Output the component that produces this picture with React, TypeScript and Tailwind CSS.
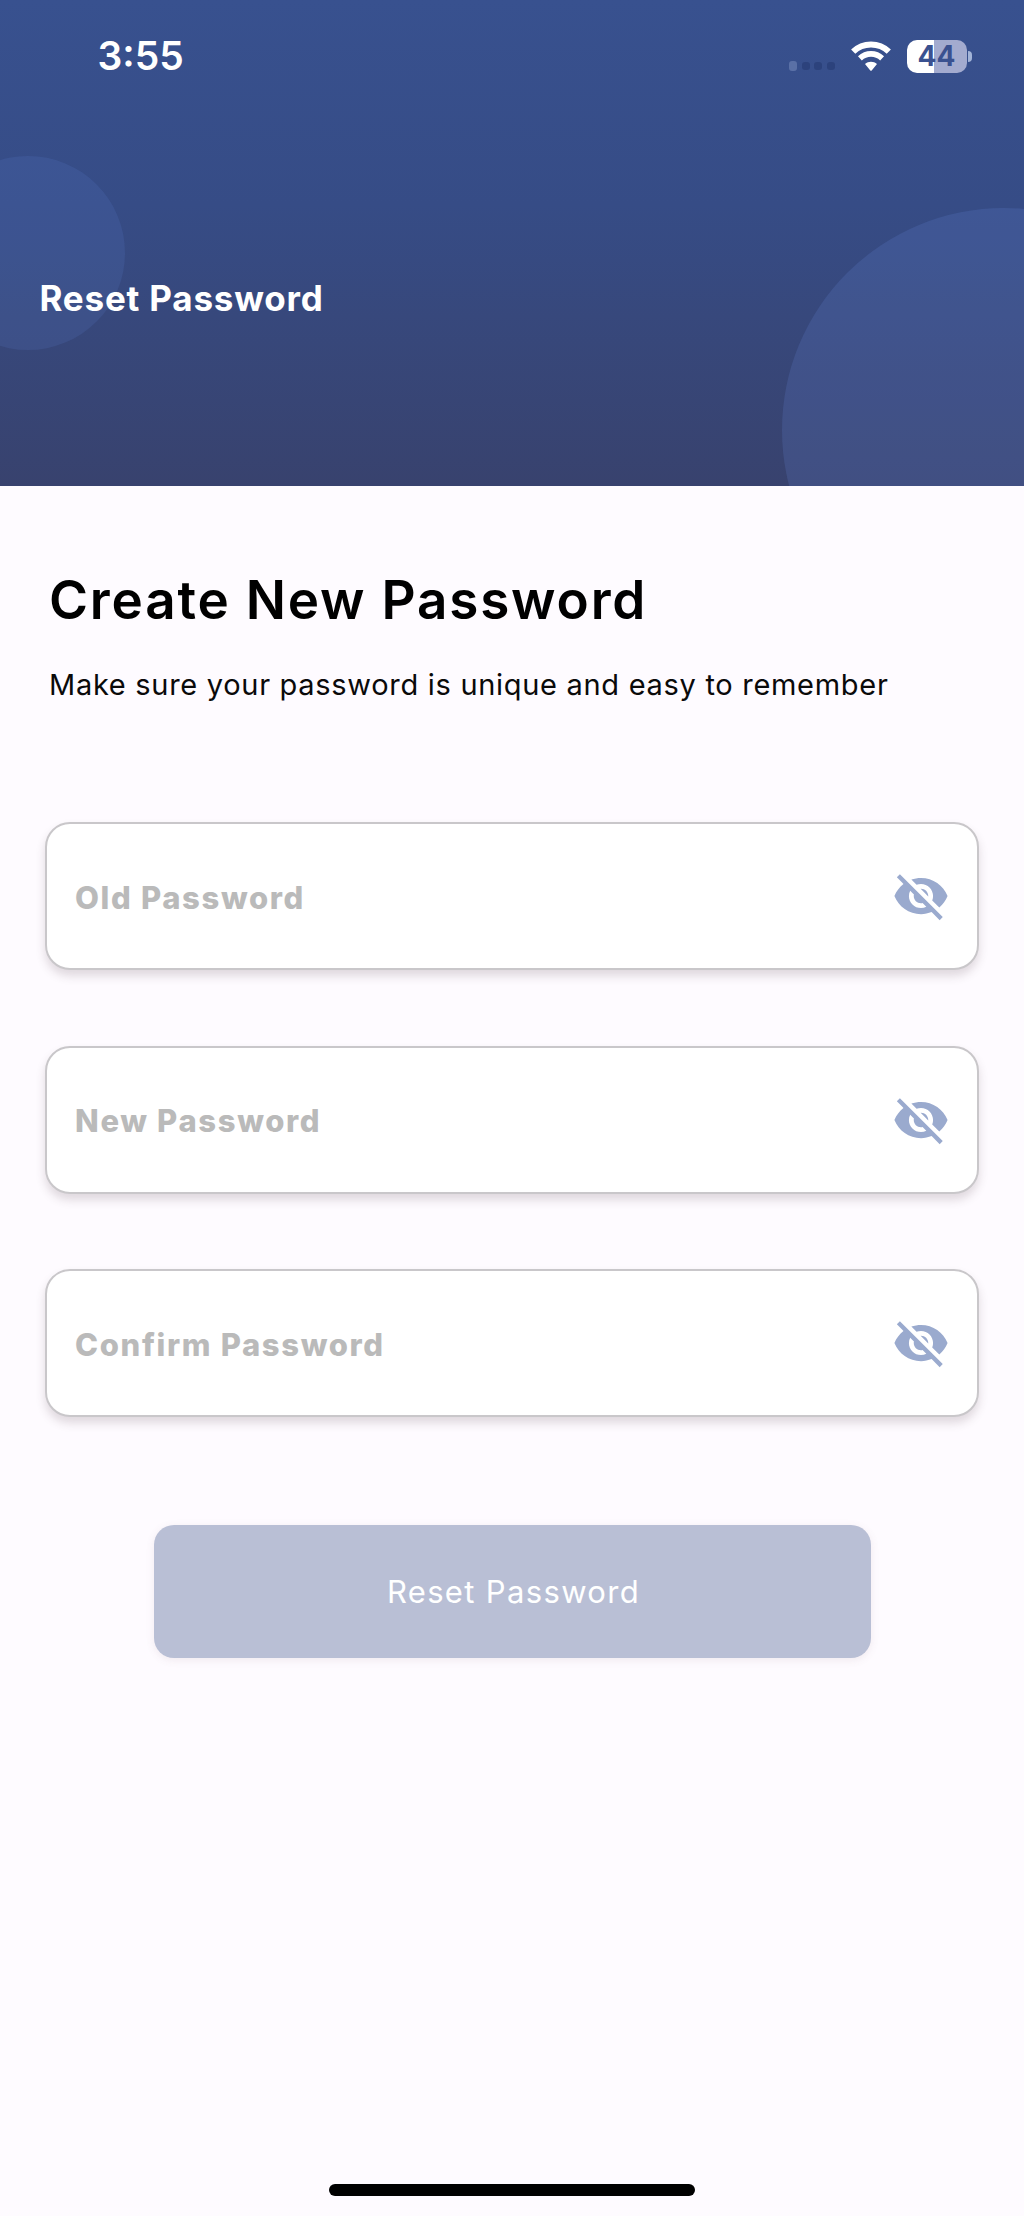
import React from "react";

function EyeOff() {
  return (
    <svg viewBox="0 0 24 24" className="size-[58px] shrink-0 fill-[#9aaace]" aria-hidden="true">
      <path d="M12 7c2.76 0 5 2.24 5 5 0 .65-.13 1.26-.36 1.83l2.92 2.92c1.51-1.26 2.7-2.89 3.43-4.75-1.73-4.39-6-7.5-11-7.5-1.4 0-2.74.25-3.98.7l2.16 2.16C10.74 7.13 11.35 7 12 7zM2 4.27l2.28 2.28.46.46C3.08 8.3 1.78 10.02 1 12c1.73 4.39 6 7.5 11 7.5 1.55 0 3.03-.3 4.38-.84l.42.42L19.73 22 21 20.73 3.27 3 2 4.27zM7.53 9.8l1.55 1.55c-.05.21-.08.43-.08.65 0 1.66 1.34 3 3 3 .22 0 .44-.03.65-.08l1.55 1.55c-.67.33-1.41.53-2.2.53-2.76 0-5-2.24-5-5 0-.79.2-1.53.53-2.2zm4.31-.78l3.15 3.15.02-.16c0-1.66-1.34-3-3-3l-.17.01z" />
    </svg>
  );
}

function Wifi() {
  return (
    <svg viewBox="0 0 40 30" className="h-[30px] w-10" fill="none" aria-hidden="true">
      <path d="M2.2 10.6C12 1 28 1 37.8 10.6" stroke="#fff" strokeWidth="6" />
      <path d="M8.9 17.4C15.2 11.4 24.8 11.4 31.1 17.4" stroke="#fff" strokeWidth="5.6" />
      <path d="M14 23.1C17.4 20 22.6 20 26 23.1L20.9 29.2Q20 30.3 19.1 29.2Z" fill="#fff" />
    </svg>
  );
}

function StatusBar() {
  return (
    <div className="relative flex h-[112px] items-center justify-between pr-[52px] pl-[97.5px] text-white">
      <span className="text-[39px] leading-[112px] font-semibold">3:55</span>
      <div className="flex items-center">
        <div className="mt-5 mr-4 flex items-center gap-[4.5px]">
          <span className="h-[10px] w-2 rounded-[3px] bg-[#5a70a6]" />
          <span className="size-2 rounded-[3px] bg-[#2c427c]" />
          <span className="size-2 rounded-[3px] bg-[#2c427c]" />
          <span className="size-2 rounded-[3px] bg-[#2c427c]" />
        </div>
        <Wifi />
        <div className="ml-[16px] flex h-[33px] w-[60px] items-center justify-center rounded-[10px] bg-[linear-gradient(90deg,#ffffff_44.5%,#a3abcf_44.5%)]">
          <span className="text-[28px] leading-[33px] font-bold text-[#3a5190]">44</span>
        </div>
        <span className="ml-[1.5px] h-[11px] w-[4px] rounded-r-full bg-[#a3b4d8]" />
      </div>
    </div>
  );
}

function Header() {
  return (
    <header className="relative h-[485.5px] overflow-hidden bg-[linear-gradient(180deg,#38518f_0%,#364c86_42%,#37487c_65%,#38426e_100%)]">
      <div className="absolute top-[156px] -left-[69px] size-[194px] rounded-full bg-[#6f95ee]/12" />
      <div className="absolute top-[208px] left-[782px] size-[444px] rounded-full bg-[#6f95ee]/16" />
      <StatusBar />
      <div className="relative mt-[164px] pl-[39.5px] text-[35px] leading-[44px] font-bold tracking-[0.8px] text-white">
        Reset Password
      </div>
    </header>
  );
}

function PasswordField({ label }: { label: string }) {
  return (
    <div className="flex h-[148px] items-center justify-between rounded-[25px] border-2 border-[#c9c7ca] bg-white pr-[27px] pl-[28px] shadow-[0_6px_10px_rgba(70,50,60,0.17)]">
      <span className="pt-[3px] text-[31px] leading-10 font-extrabold tracking-[1.65px] text-[#bababa]">{label}</span>
      <EyeOff />
    </div>
  );
}

export default function App() {
  return (
    <div className="flex h-[2216px] w-[1024px] flex-col bg-[#fefbff] font-[Inter,sans-serif]">
      <Header />
      <main className="flex flex-1 flex-col px-[45px]">
        <h1 className="mt-[82.5px] pl-[4px] text-[53px] leading-[64px] font-semibold tracking-[1.8px] text-black">
          Create New Password
        </h1>
        <p className="mt-[33px] pl-[4px] text-[29px] leading-[40px] tracking-[0.7px] whitespace-nowrap text-[#0a0a0a]">
          Make sure your password is unique and easy to remember
        </p>
        <div className="mt-[117px] flex flex-col gap-[75.6px]">
          <PasswordField label="Old Password" />
          <PasswordField label="New Password" />
          <PasswordField label="Confirm Password" />
        </div>
        <button className="mt-[108px] ml-[108.5px] h-[133px] w-[717px] rounded-[20px] bg-[#b9bfd5] pl-[3px] text-[31px] leading-10 font-normal tracking-[1.35px] text-white shadow-[0_2px_8px_rgba(120,80,100,0.10)]">
          Reset Password
        </button>
      </main>
      <div className="mb-5 h-[12.5px] w-[366px] self-center rounded-full bg-black" />
    </div>
  );
}
